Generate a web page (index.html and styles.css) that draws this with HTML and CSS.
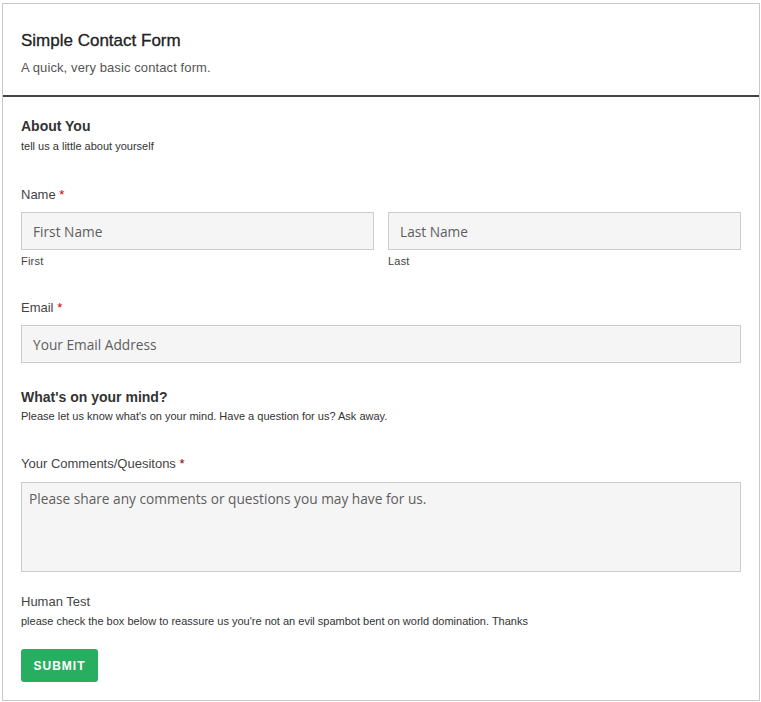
FILE: index.html
```html
<!DOCTYPE html>
<html>
<head>
<meta charset="utf-8">
<link rel="stylesheet" href="styles.css">
</head>
<body>
<div class="form-box">
  <header class="form-head">
    <h1 class="form-title">Simple Contact Form</h1>
    <p class="form-sub">A quick, very basic contact form.</p>
  </header>
  <form class="form-body">
    <h2 class="section-title">About You</h2>
    <p class="section-desc">tell us a little about yourself</p>

    <div class="field field-name">
      <label class="label">Name <span class="req">*</span></label>
      <div class="name-row">
        <div class="name-col">
          <input class="input" type="text" placeholder="First Name">
          <span class="sublabel">First</span>
        </div>
        <div class="name-col">
          <input class="input" type="text" placeholder="Last Name">
          <span class="sublabel">Last</span>
        </div>
      </div>
    </div>

    <div class="field field-email">
      <label class="label">Email <span class="req">*</span></label>
      <input class="input" type="email" placeholder="Your Email Address">
    </div>

    <h2 class="section-title section-mind">What's on your mind?</h2>
    <p class="section-desc mind-desc">Please let us know what's on your mind. Have a question for us? Ask away.</p>

    <div class="field field-comments">
      <label class="label">Your Comments/Quesitons <span class="req req-dark">*</span></label>
      <textarea class="textarea" placeholder="Please share any comments or questions you may have for us."></textarea>
    </div>

    <div class="field field-human">
      <span class="label">Human Test</span>
      <p class="section-desc human-desc">please check the box below to reassure us you're not an evil spambot bent on world domination. Thanks</p>
    </div>

    <button class="submit" type="button">Submit</button>
  </form>
</div>
</body>
</html>
```

FILE: styles.css
```css
* { box-sizing: border-box; }
html, body { margin: 0; padding: 0; background: #fff; }
body {
  font-family: "Liberation Sans", Arial, sans-serif;
  color: #333;
  padding: 3px 1px 0 2px;
}
.form-box {
  border: 1px solid #c9c9c9;
  height: 698px;
  background: #fff;
}
.form-head {
  padding: 28px 18px 0 18px;
  height: 93px;
  border-bottom: 2px solid #444;
}
.form-title {
  margin: 0;
  font-size: 17px;
  font-weight: normal;
  color: #222;
  line-height: 18px;
  -webkit-text-stroke: 0.3px #222;
}
.form-sub {
  margin: 10px 0 0;
  font-size: 13px;
  color: #555;
  letter-spacing: 0.1px;
  line-height: 15px;
}
.form-body {
  padding: 21px 18px 0 18px;
  margin: 0;
}
.section-title {
  margin: 0;
  font-size: 14px;
  font-weight: bold;
  color: #333;
  line-height: 16px;
}
.section-desc {
  margin: 6px 0 0;
  font-size: 11px;
  color: #333;
  line-height: 13px;
}
.mind-desc { margin-top: 5px; }
.field { display: flex; flex-direction: column; }
.field-name { margin-top: 34px; }
.label {
  font-size: 13px;
  color: #444;
  line-height: 15px;
}
.req { color: #c00; }
.req-dark { color: #800; }
.name-row {
  display: flex;
  gap: 14px;
  margin-top: 10px;
}
.name-col { flex: 1; display: flex; flex-direction: column; }
.input {
  width: 100%;
  height: 38px;
  border: 1px solid #ccc;
  background: #f5f5f5;
  padding: 0 11px;
  font-family: "Open Sans", sans-serif;
  font-size: 13.7px;
  color: #555;
  outline: none;
  margin: 0;
}
.input::placeholder, .textarea::placeholder { color: #5e5e5e; opacity: 1; }
.sublabel {
  font-size: 11px;
  color: #444;
  margin-top: 5px;
  line-height: 12px;
  letter-spacing: 0.2px;
}
.field-email { margin-top: 33px; }
.field-email .input { margin-top: 10px; }
.section-mind { margin-top: 26px; }
.field-comments { margin-top: 33px; }
.textarea {
  margin-top: 11px;
  width: 100%;
  height: 90px;
  border: 1px solid #ccc;
  background: #f5f5f5;
  padding: 6px 7px;
  font-family: "Open Sans", sans-serif;
  font-size: 13.7px;
  color: #555;
  resize: none;
  outline: none;
  display: block;
}
.field-human { margin-top: 22px; }
.human-desc { margin-top: 6px; }
.submit {
  margin-top: 21px;
  width: 77px;
  height: 33px;
  background: #27ae60;
  border: none;
  border-radius: 3px;
  color: #fff;
  font-family: "Liberation Sans", Arial, sans-serif;
  font-weight: bold;
  font-size: 12px;
  letter-spacing: 1px;
  text-transform: uppercase;
  padding: 0;
  display: block;
}
```
